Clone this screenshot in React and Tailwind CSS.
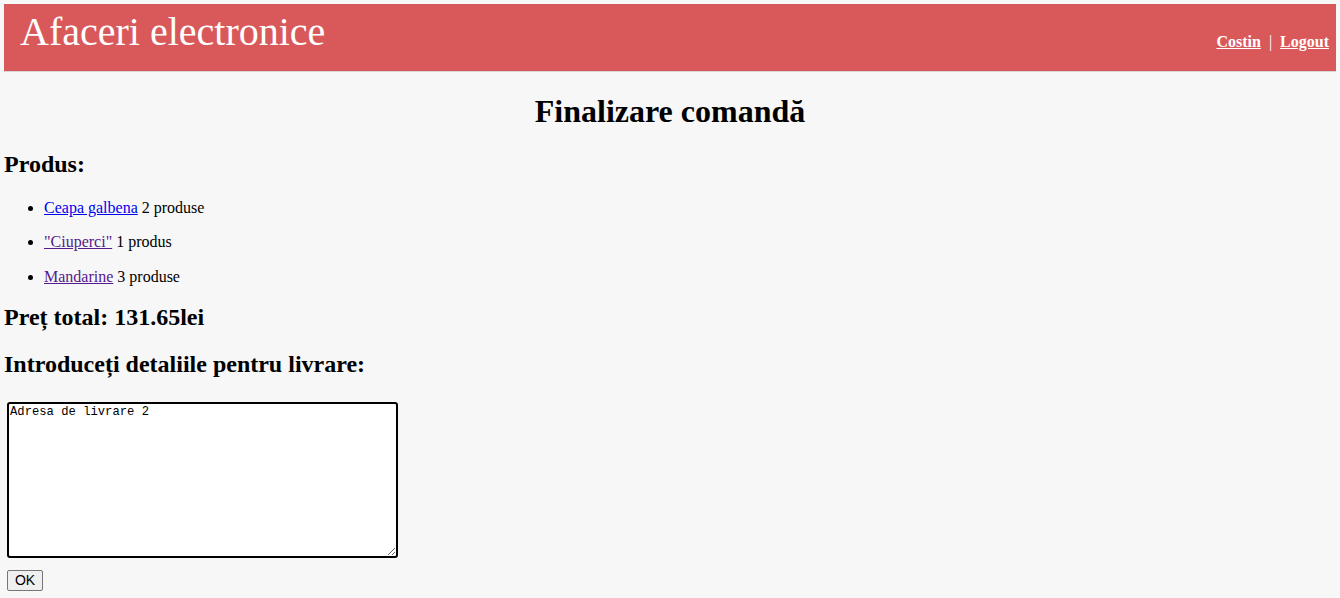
import React from 'react';

const items = [
    { name: 'Ceapa galbena', qty: '2 produse', visited: false },
    { name: '"Ciuperci"', qty: '1 produs', visited: true },
    { name: 'Mandarine', qty: '3 produse', visited: true },
];

const App = () => {
    return (
    <div className="min-h-screen bg-[#f7f7f7] px-1 pt-1 pb-2 font-['Liberation_Serif','Times_New_Roman',serif] text-black">
        <div className="h-[68px] bg-[#d9595b] border-b border-[#d6d6d6] flex justify-between">
            <div className="pl-4 pt-[5px] text-[40px] leading-[1.15] text-white">Afaceri electronice</div>
            <div className="pr-[7px] pt-[29px] text-[16px] leading-[1.15] text-white flex">
                <a href="#" className="font-bold underline">Costin</a>
                <span className="mx-2">|</span>
                <a href="#" className="font-bold underline">Logout</a>
            </div>
        </div>

        <h1 className="text-[32px] font-bold text-center leading-[1.15] mt-[21px] mb-[21.44px]">Finalizare comandă</h1>

        <h2 className="text-[24px] font-bold leading-[1.15]">Produs:</h2>
        <ul className="list-disc pl-10 mt-[19.92px] text-[16px] leading-[1.15]">
            {items.map((item, idx) => (
                <li key={idx} className={idx > 0 ? 'mt-4' : ''}>
                    <a href="#" className={item.visited ? 'underline text-[#551a8b]' : 'underline text-[#0000ee]'}>{item.name}</a> {item.qty}
                </li>
            ))}
        </ul>

        <h2 className="text-[24px] font-bold leading-[1.15] mt-[18px]">Preț total: 131.65lei</h2>
        <h2 className="text-[24px] font-bold leading-[1.15] mt-[19.92px]">Introduceți detaliile pentru livrare:</h2>

        <div className="mt-[22.5px] pl-[3px]">
            <textarea
                defaultValue="Adresa de livrare 2"
                className="block w-[391px] h-[156px] border-2 border-black rounded-[3px] bg-white px-[1px] py-[1px] font-['Liberation_Mono',monospace] text-[12.2px] leading-[1.2] resize-y"
            />
            <button className="mt-[12px] block w-[36px] h-[21px] bg-[#efefef] border border-[#767676] rounded-[2px] font-['Liberation_Sans',Arial,sans-serif] text-[14px] leading-none">
                OK
            </button>
        </div>
    </div>
    );
}

export default App;
